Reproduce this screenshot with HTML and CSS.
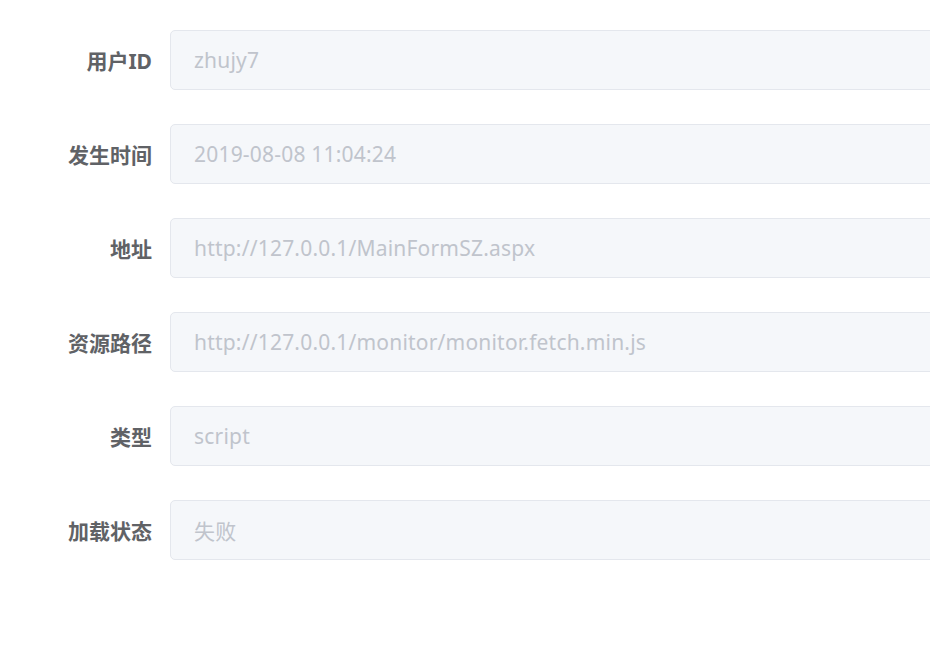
FILE: index.html
```html
<!DOCTYPE html>
<html lang="zh">
<head>
<meta charset="utf-8">
<link rel="stylesheet" href="styles.css">
</head>
<body>
<form class="form">
  <div class="row"><label class="label">用户ID</label><div class="input">zhujy7</div></div>
  <div class="row"><label class="label">发生时间</label><div class="input">2019-08-08 11:04:24</div></div>
  <div class="row"><label class="label">地址</label><div class="input">http://127.0.0.1/MainFormSZ.aspx</div></div>
  <div class="row"><label class="label">资源路径</label><div class="input">http://127.0.0.1/monitor/monitor.fetch.min.js</div></div>
  <div class="row"><label class="label">类型</label><div class="input">script</div></div>
  <div class="row"><label class="label">加载状态</label><div class="input">失败</div></div>
</form>
</body>
</html>
```
FILE: styles.css
```css
html, body {
  margin: 0;
  padding: 0;
  background: #ffffff;
  overflow: hidden;
}
body {
  width: 930px;
  height: 660px;
  font-family: "Noto Sans", "Noto Sans CJK SC", sans-serif;
}
.form {
  display: flex;
  flex-direction: column;
  gap: 34px;
  padding-top: 30px;
}
.row {
  display: flex;
  align-items: center;
}
.label {
  flex: none;
  width: 170px;
  padding-right: 18px;
  box-sizing: border-box;
  text-align: right;
  font-size: 21px;
  font-weight: 700;
  color: #606266;
}
.input {
  flex: none;
  width: 800px;
  height: 60px;
  box-sizing: border-box;
  border: 1px solid #e4e7ed;
  border-radius: 5px;
  background: #f5f7fa;
  color: #c0c4cc;
  font-size: 21px;
  letter-spacing: 0.2px;
  padding-left: 23px;
  display: flex;
  align-items: center;
}
```
